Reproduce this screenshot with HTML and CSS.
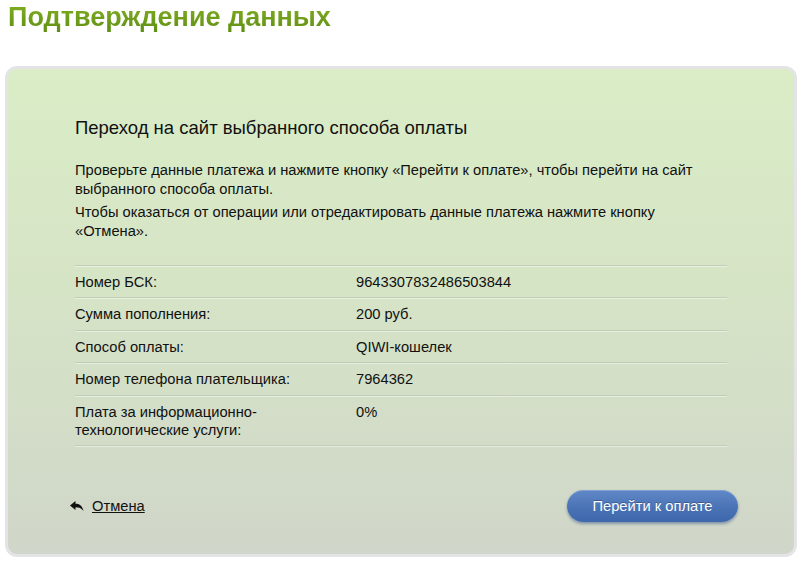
FILE: index.html
```html
<!DOCTYPE html>
<html lang="ru">
<head>
<meta charset="utf-8">
<title>Подтверждение данных</title>
<link rel="stylesheet" href="styles.css">
</head>
<body>
<h1 class="page-title">Подтверждение данных</h1>
<div class="panel">
  <h2 class="panel-heading">Переход на сайт выбранного способа оплаты</h2>
  <p class="note">Проверьте данные платежа и нажмите кнопку «Перейти к оплате», чтобы перейти на сайт выбранного способа оплаты.</p>
  <p class="note note-second">Чтобы оказаться от операции или отредактировать данные платежа нажмите кнопку «Отмена».</p>
  <div class="details">
    <div class="row"><div class="label">Номер БСК:</div><div class="value">9643307832486503844</div></div>
    <div class="row"><div class="label">Сумма пополнения:</div><div class="value">200 руб.</div></div>
    <div class="row"><div class="label">Способ оплаты:</div><div class="value">QIWI-кошелек</div></div>
    <div class="row"><div class="label">Номер телефона плательщика:</div><div class="value">7964362</div></div>
    <div class="row row-last"><div class="label">Плата за информационно-<br>технологические услуги:</div><div class="value">0%</div></div>
  </div>
  <div class="actions">
    <a class="cancel" href="#">
      <svg class="cancel-icon" width="14" height="11" viewBox="0 0 14 11"><path d="M0 4.5 L5.5 0 V2.8 C9.5 2.8 12.5 5 13.5 10 C11.5 7.2 9 6.3 5.5 6.3 V9 Z" fill="#111"/></svg>
      <span class="cancel-text">Отмена</span>
    </a>
    <button class="pay-btn" type="button">Перейти к оплате</button>
  </div>
</div>
</body>
</html>
```
FILE: styles.css
```css
html, body {
  margin: 0;
  padding: 0;
  background: #ffffff;
}
body {
  font-family: Arial, "Liberation Sans", sans-serif;
  color: #111;
  width: 800px;
  height: 562px;
  overflow: hidden;
}
.page-title {
  margin: 2px 0 0 8px;
  font-size: 27px;
  line-height: 31px;
  font-weight: bold;
  color: #6c9c1c;
  background: linear-gradient(#84b024, #5e8e12);
  -webkit-background-clip: text;
  background-clip: text;
  -webkit-text-fill-color: transparent;
}
.panel {
  margin: 33px 3px 0 5px;
  border: 3px solid #e4e4e6;
  border-radius: 12px;
  background: linear-gradient(#daedc6 0%, #d6e4c6 45%, #d0d6c9 100%);
  padding: 47px 67px 30px 67px;
  height: 491px;
  box-sizing: border-box;
}
.panel-heading {
  margin: 0;
  font-size: 18.5px;
  line-height: 24px;
  font-weight: normal;
  color: #111;
}
.note {
  margin: 0;
  font-size: 14.7px;
  line-height: 19px;
  color: #111;
}
.panel-heading + .note {
  margin-top: 21px;
}
.note-second {
  margin-top: 4px;
}
.details {
  margin-top: 24px;
  border-bottom: 1px solid #c3ccb6;
  box-shadow: 0 1px 0 rgba(255,255,255,0.45);
}
.row {
  display: grid;
  grid-template-columns: 281px 1fr;
  border-top: 1px solid #c3ccb6;
  box-shadow: inset 0 1px 0 rgba(255,255,255,0.45);
  padding: 7px 0 6px;
  font-size: 14.7px;
  line-height: 18px;
}
.row:nth-child(2), .row:nth-child(4) {
  padding-bottom: 7px;
}
.actions {
  margin-top: 44px;
  display: flex;
  align-items: center;
  justify-content: space-between;
}
.cancel {
  display: flex;
  align-items: center;
  gap: 8px;
  margin-left: -5px;
  color: #111;
  text-decoration: none;
  font-size: 14.7px;
}
.cancel-icon {
  display: block;
}
.cancel-text {
  text-decoration: underline;
}
.pay-btn {
  width: 171px;
  height: 32px;
  margin-right: -11px;
  border: none;
  border-radius: 16px;
  background: linear-gradient(#6189c8, #4a73b6 55%, #3f67ab);
  box-shadow: 0 2px 3px rgba(40, 70, 130, 0.45), inset 0 1px 0 rgba(255,255,255,0.2);
  color: #fff;
  font-family: Arial, "Liberation Sans", sans-serif;
  font-size: 14.7px;
  cursor: pointer;
  text-shadow: 0 -1px 0 rgba(0,0,0,0.25);
}
```
